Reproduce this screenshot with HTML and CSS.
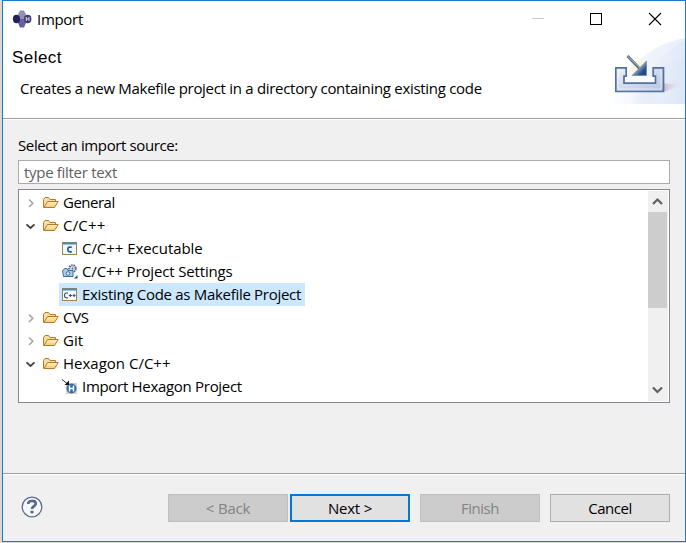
FILE: index.html
```html
<!DOCTYPE html>
<html lang="en">
<head>
<meta charset="utf-8">
<title>Import</title>
<link rel="stylesheet" href="styles.css">
</head>
<body>
<svg class="defs" width="0" height="0">
  <defs>
    <linearGradient id="fold" x1="0" y1="0" x2="0" y2="1"><stop offset="0" stop-color="#fff3c4"/><stop offset="1" stop-color="#f3c973"/></linearGradient>
    <symbol id="folder" viewBox="0 0 16 16">
      <path d="M.5 12.5V4.5L2 2.5h3.5l1.5 2h5.5v2.5" fill="#f8dfa0" stroke="#b17a2f"/>
      <path d="M1 12.5L4.5 6.5H15.2L11.5 12.5z" fill="url(#fold)" stroke="#b17a2f" stroke-linejoin="round"/>
    </symbol>
    <symbol id="right" viewBox="0 0 12 12"><path d="M4 2.5L7.8 6.3L4 10" fill="none" stroke="#a6a6a6" stroke-width="1.6"/></symbol>
    <symbol id="down" viewBox="0 0 12 12"><path d="M1.5 4.3L5.5 8L9.5 4.3" fill="none" stroke="#404040" stroke-width="1.8"/></symbol>
    <linearGradient id="sky" x1="0" y1="0" x2="1" y2="0"><stop offset="0" stop-color="#dfe8f8" stop-opacity="0"/><stop offset=".5" stop-color="#e8eefa"/><stop offset="1" stop-color="#dde6f7"/></linearGradient>
    <linearGradient id="tray" x1="0" y1="0" x2="1" y2="1"><stop offset="0" stop-color="#eef2f8"/><stop offset="1" stop-color="#b3c2e4"/></linearGradient>
    <linearGradient id="arrow" x1="0" y1="0" x2="1" y2="1"><stop offset=".35" stop-color="#b9cae5"/><stop offset=".75" stop-color="#234b83"/></linearGradient>
    <linearGradient id="shade"><stop offset="0" stop-color="#c4b6cd"/><stop offset="1" stop-color="#e3e4f3" stop-opacity="0"/></linearGradient>
  </defs>
</svg>
<div class="window">
  <header class="head">
    <div class="titlebar">
      <svg class="app" width="20" height="18" viewBox="0 0 20 18">
        <path d="M8 .5h4l2 4-2 4.5H8L6 4.5z" fill="#918eb8"/><path d="M8 9h4l2 4-2 4.5H8L6 13z" fill="#6662a0"/>
        <ellipse cx="4.5" cy="9" rx="3.6" ry="4.2" fill="#25205c"/><ellipse cx="15.7" cy="9" rx="3.7" ry="4.2" fill="#3f3a70"/>
        <path d="M14.3 7v4M17 7v4M14.3 9H17" stroke="#dcd9ea" stroke-width="1"/>
      </svg>
      <span class="title">Import</span>
      <svg class="controls" width="125" height="14" viewBox="0 0 125 14">
        <path d="M0 6.5h12" stroke="#c8c8c8"/><rect x="58.5" y="1.5" width="11" height="11" fill="none" stroke="#000"/>
        <path d="M117 1l12 12M129 1l-12 12" stroke="#000" stroke-width="1.1"/>
      </svg>
    </div>
    <h1>Select</h1>
    <p class="desc">Creates a new Makefile project in a directory containing existing code</p>
    <svg class="banner" width="75" height="70" viewBox="610 35 75 70">
      <path d="M610 104C625 72 642 46 685 38V104z" fill="url(#sky)" opacity=".65"/>
      <path d="M635 104C647 70 664 50 685 40V104z" fill="url(#sky)" opacity=".6"/>
      <path d="M630 104C643 76 661 61 685 59V104z" fill="url(#sky)"/>
      <path d="M663 92V83Q672 85 682 82Q676 89 663 92z" fill="url(#shade)"/>
      <circle cx="639" cy="68" r="8" fill="#fbf8cf" opacity=".85"/>
      <path d="M624 76h31v8h-31z" fill="#f8faff"/>
      <path d="M615.8 67.8H626.2V76.2H624V83.2H655.5V76.2H653.2V67.8H663.5V91.5H615.8z" fill="url(#tray)" stroke="#53709f" stroke-width="1.7"/>
      <path d="M618 70v19h43V70" fill="none" stroke="#fff" opacity=".5"/>
      <path d="M627.5 56L640 69" stroke="#577394" stroke-width="2.8"/>
      <path d="M627.5 56L640 68" stroke="#9fb5d2" stroke-width="1"/>
      <path d="M646.5 61V75.5H632z" fill="url(#arrow)" stroke="#638bae" stroke-width=".7"/>
    </svg>
  </header>
  <main>
    <label class="source">Select an import source:</label>
    <div class="filter"><span>type filter text</span></div>
    <div class="tree">
      <div class="rows">
        <div class="row"><svg class="tw"><use href="#right"/></svg><svg class="ic"><use href="#folder"/></svg><span class="name general">General</span></div>
        <div class="row"><svg class="tw"><use href="#down"/></svg><svg class="ic"><use href="#folder"/></svg><span class="name cc">C/C++</span></div>
        <div class="row child"><svg class="ic" viewBox="0 0 16 16"><rect x=".5" y="1.5" width="14" height="12" fill="#eef7fc" stroke="#9a8750"/><path d="M1 2.5h13" stroke="#4d87bd" stroke-width="2"/><path d="M9.8 6.3Q5.8 5.3 5.8 8.4T9.8 10.7" fill="none" stroke="#285a91" stroke-width="1.7"/></svg><span class="name exe">C/C++ Executable</span></div>
        <div class="row child"><svg class="ic" viewBox="0 0 16 16"><circle cx="10.5" cy="4.5" r="3.3" fill="#e2e7ec" stroke="#536c87" stroke-width="2" stroke-dasharray="1.5 .8"/><circle cx="10.5" cy="4.5" r="1" fill="#536c87"/><path d="M.5 6.5L3 4.5h2l1 2h5v6H1.5z" fill="#a9cdec" stroke="#396f9f"/><circle cx="6" cy="9.5" r="1.8" fill="#eef7fc" stroke="#396f9f"/><path d="M15.5 11v3.5H12z" fill="#204f83"/></svg><span class="name set">C/C++ Project Settings</span></div>
        <div class="row child selected"><svg class="ic" viewBox="0 0 16 16"><rect x=".5" y="1.5" width="14" height="12" fill="#f7fbfc" stroke="#9a8750"/><path d="M1 2.5h13" stroke="#4d87bd" stroke-width="2"/><path d="M6 6.2Q2.5 5.3 2.5 8.4T6 10.8M6.8 8.5h3.2M8.4 6.9v3.2M10.6 8.5h3M12.1 6.9v3.2" fill="none" stroke="#285a91" stroke-width="1.2"/></svg><span class="name exist">Existing Code as Makefile Project</span></div>
        <div class="row"><svg class="tw"><use href="#right"/></svg><svg class="ic"><use href="#folder"/></svg><span class="name cvs">CVS</span></div>
        <div class="row"><svg class="tw"><use href="#right"/></svg><svg class="ic"><use href="#folder"/></svg><span class="name git">Git</span></div>
        <div class="row"><svg class="tw"><use href="#down"/></svg><svg class="ic"><use href="#folder"/></svg><span class="name hex">Hexagon C/C++</span></div>
        <div class="row child"><svg class="ic" viewBox="0 0 16 16"><rect x="4" y="4" width="11" height="11" fill="#dfd2bd"/><circle cx="9.5" cy="9.5" r="5" fill="#3470ab"/><path d="M7.5 6.5v6M11.5 6.5v6M7.5 9.5h4" stroke="#fff" stroke-width="1.4"/><path d="M0 .5L5 4.5" stroke="#333" stroke-width="1"/><path d="M7 1.5V6H2.5z" fill="#111"/></svg><span class="name imp">Import Hexagon Project</span></div>
      </div>
      <div class="scroll">
        <svg width="20" height="21" viewBox="0 0 20 21"><path d="M5 13L9.5 8.5L14 13" fill="none" stroke="#606060" stroke-width="2.2"/></svg>
        <div class="thumb"></div>
        <svg class="bottom" width="20" height="21" viewBox="0 0 20 21"><path d="M5 7.5L9.5 12L14 7.5" fill="none" stroke="#606060" stroke-width="2.2"/></svg>
      </div>
    </div>
  </main>
  <footer>
    <svg class="help" width="22" height="22" viewBox="0 0 22 22"><circle cx="11" cy="11" r="9.8" fill="#f7f8fa" stroke="#596b8b" stroke-width="1.3"/><path d="M7.3 8V6.8Q8.4 4.9 11 4.9C13.2 4.9 14.8 6 14.8 7.8C14.8 10.2 11 10.2 11 13" fill="none" stroke="#596b8b" stroke-width="2.7"/><path d="M9.5 14.7h3v2.7h-3z" fill="#596b8b"/></svg>
    <button class="back" disabled><span>&lt; Back</span></button>
    <button class="next"><span>Next &gt;</span></button>
    <button class="finish" disabled><span>Finish</span></button>
    <button class="cancel"><span>Cancel</span></button>
  </footer>
</div>
</body>
</html>
```
FILE: styles.css
```css
* { box-sizing: border-box; }
body { margin: 0; padding-left: 2px; width: 686px; height: 543px; overflow: hidden; background: #d9d9d9; font: 15px/20px "Open Sans", "Noto Sans", sans-serif; letter-spacing: -.3px; color: #000; }
.defs { position: absolute; }
svg { display: block; flex: none; }
.window { width: 684px; height: 542px; border: 1px solid #1979ca; background: #f0f0f0; display: flex; flex-direction: column; }
.head { position: relative; height: 118px; flex: none; background: #fff; border-bottom: 1px solid #a0a0a0; box-shadow: 0 1px #fff; }
.titlebar { display: flex; align-items: center; height: 37px; padding-left: 9px; }
.app { margin-top: -1px; }
.title { margin: -2px 0 0 5px; width: 475px; }
.controls { margin-left: 20px; margin-top: -1px; overflow: visible; }
h1 { margin: 10px 0 0 9px; font: 17px/20px "Liberation Sans", sans-serif; letter-spacing: .45px; }
.desc { margin: 10px 0 0 17px; white-space: nowrap; }
.banner { position: absolute; right: 0; top: 34px; }
main { padding: 16px 15px 0; flex: 1; }
.source { display: block; height: 25px; white-space: nowrap; letter-spacing: -.38px; }
.filter { height: 24px; border: 1px solid #ababab; background: #fff; color: #606060; padding: 1px 5px; }
.tree { margin-top: 5px; height: 214px; border: 1px solid #828790; background: #fff; display: flex; justify-content: space-between; padding: 1px 1px 1px 0; }
.row { height: 23px; width: fit-content; display: flex; align-items: center; padding-left: 6px; }
.child { margin-left: 40px; padding-left: 3px; }
.tw { width: 12px; height: 12px; margin-right: 6px; }
.ic { width: 16px; height: 16px; }
.name { margin-left: 1px; height: 23px; line-height: 23px; padding: 0 3px; white-space: nowrap; }
.general { letter-spacing: -.5px; }
.cc { letter-spacing: .2px; }
.exe { letter-spacing: -.05px; }
.set { letter-spacing: -.15px; }
.exist { padding-right: 4px; }
.git, .hex { letter-spacing: 0; }
.selected { background: #cce8ff; }
.scroll { width: 20px; background: #f0f0f0; display: flex; flex-direction: column; }
.thumb { width: 19px; height: 96px; background: #cdcdcd; }
.bottom { margin-top: auto; }
footer { height: 68px; border-top: 1px solid #a0a0a0; box-shadow: inset 0 1px #fff; display: flex; align-items: flex-start; padding: 20px 15px 0 18px; }
.help { margin-top: 2px; margin-right: auto; }
button { width: 120px; height: 28px; padding: 0; border: 1px solid #adadad; background: #e1e1e1; font: inherit; letter-spacing: -.2px; color: #000; }
button:disabled { background: #ccc; border-color: #bfbfbf; color: #838383; }
.next { margin: 0 10px 0 2px; border: 2px solid #0078d7; }
.finish { margin-right: 10px; }
.finish, .cancel { letter-spacing: -.5px; }
```
